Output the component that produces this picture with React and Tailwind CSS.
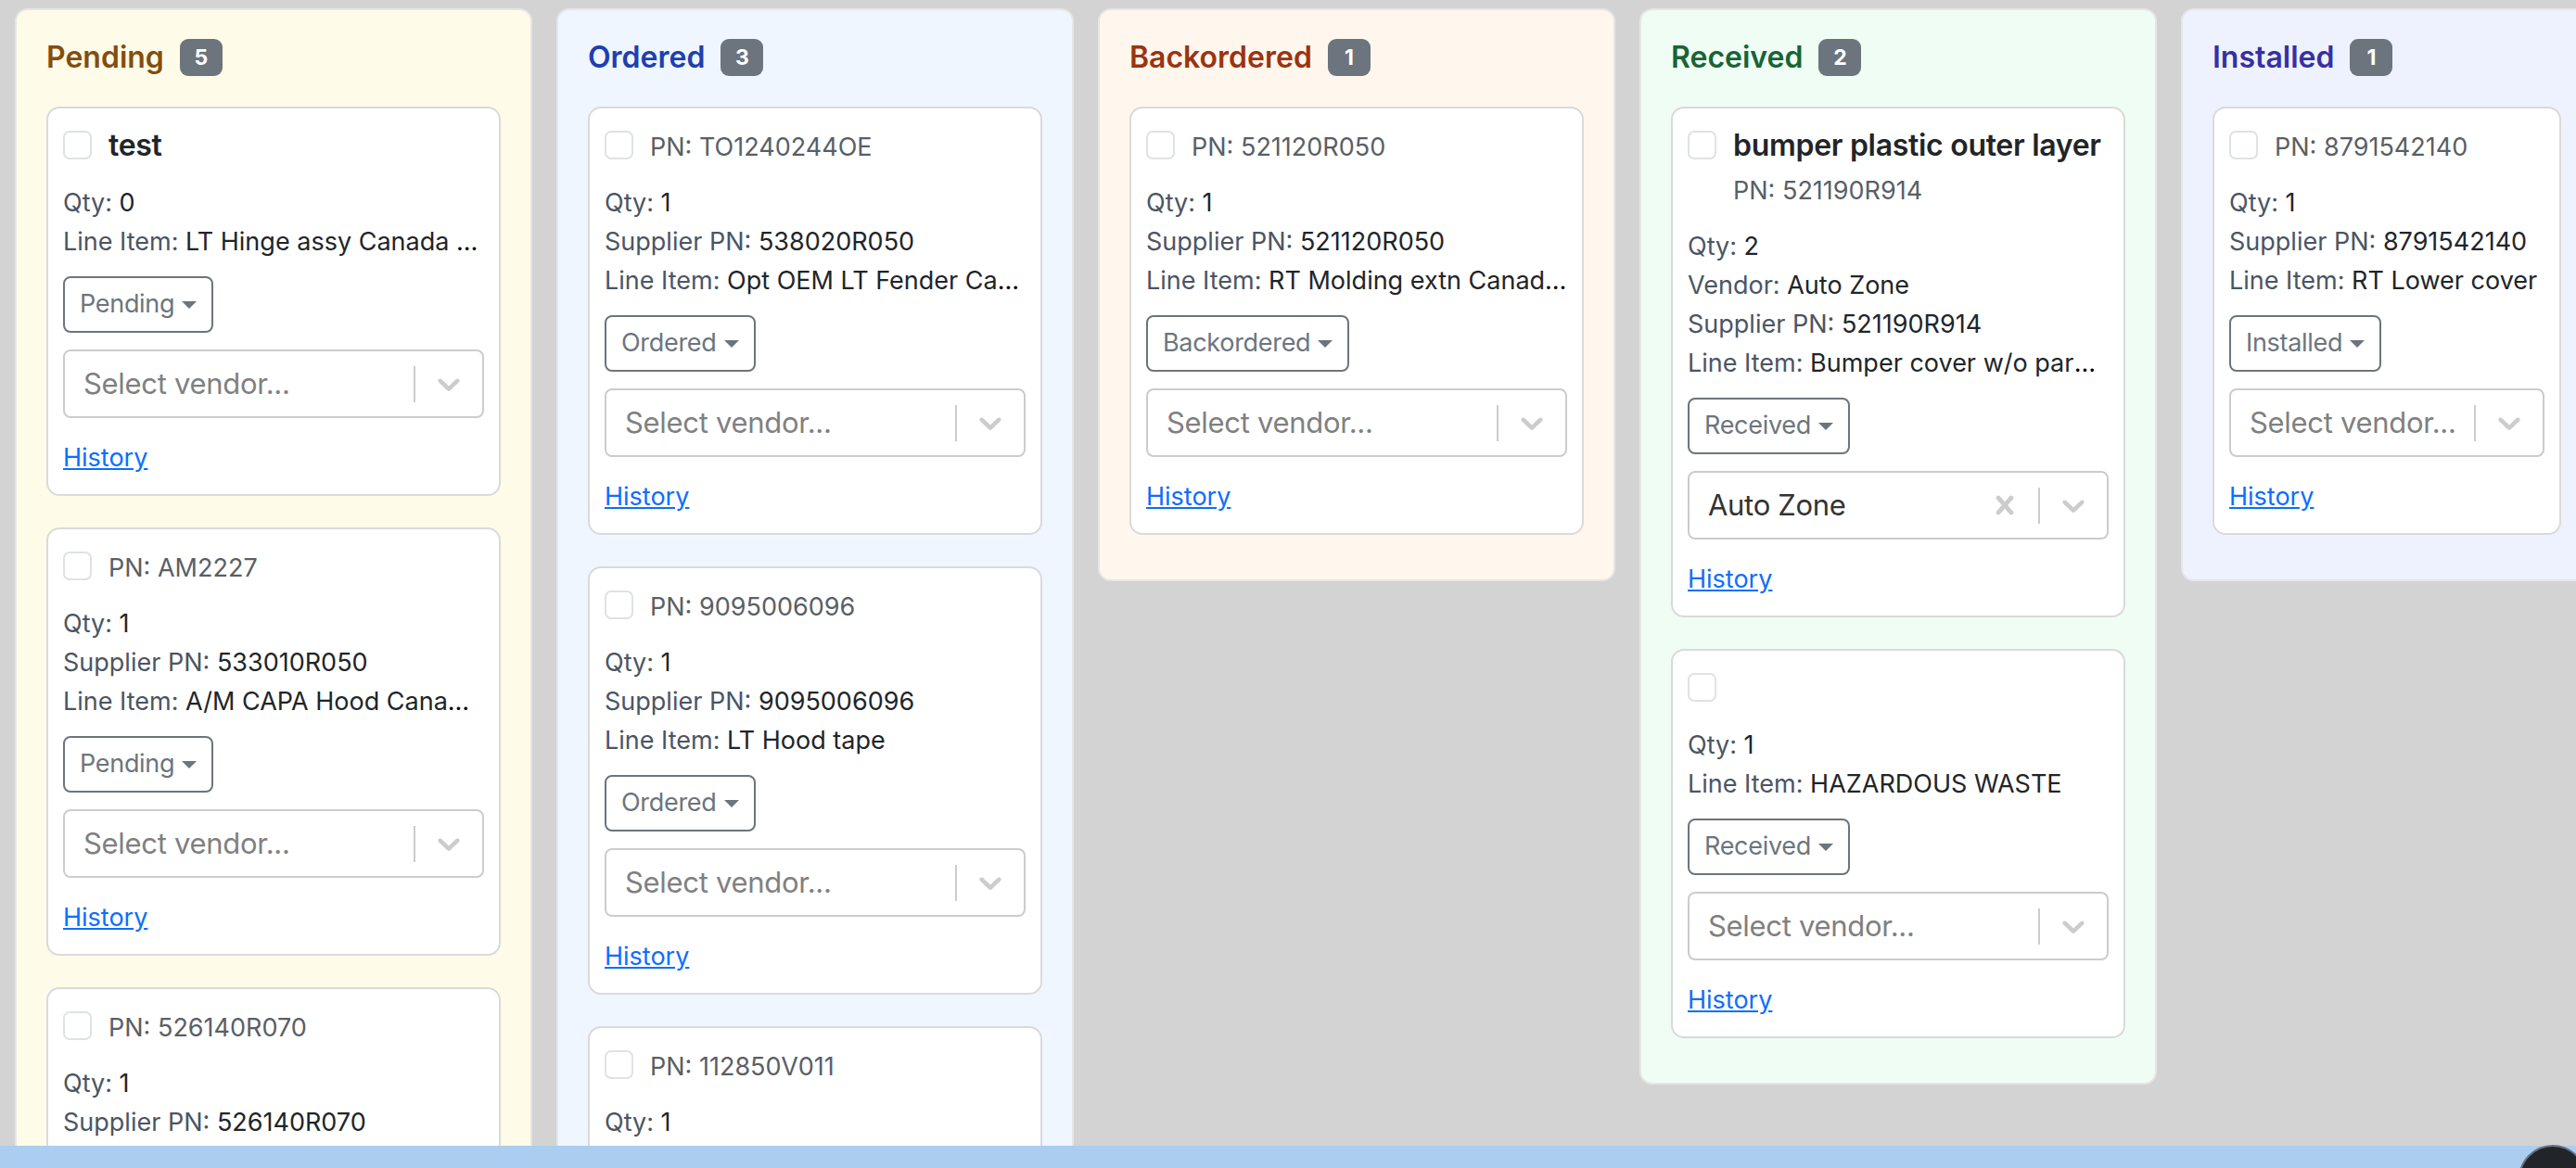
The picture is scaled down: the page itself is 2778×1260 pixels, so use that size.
import React from 'react';

const columns = [
  {
    title: 'Pending',
    count: 5,
    panel: 'w-[558px] bg-[#fefce8]',
    heading: 'text-[#854d0e]',
    items: [
      { name: 'test', qty: 0, lineItem: 'LT Hinge assy Canada built' },
      { pn: 'AM2227', qty: 1, supplierPn: '533010R050', lineItem: 'A/M CAPA Hood Canada built' },
      { pn: '526140R070', qty: 1, supplierPn: '526140R070', lineItem: 'Front bumper cover' },
    ],
  },
  {
    title: 'Ordered',
    count: 3,
    panel: 'w-[558px] bg-[#eff6ff]',
    heading: 'text-[#1e40af]',
    items: [
      { pn: 'TO1240244OE', qty: 1, supplierPn: '538020R050', lineItem: 'Opt OEM LT Fender Canada built' },
      { pn: '9095006096', qty: 1, supplierPn: '9095006096', lineItem: 'LT Hood tape' },
      { pn: '112850V011', qty: 1, supplierPn: '112850V011', lineItem: 'Radiator support' },
    ],
  },
  {
    title: 'Backordered',
    count: 1,
    panel: 'w-[558px] bg-[#fff7ed]',
    heading: 'text-[#9a3412]',
    items: [
      { pn: '521120R050', qty: 1, supplierPn: '521120R050', lineItem: 'RT Molding extn Canada built' },
    ],
  },
  {
    title: 'Received',
    count: 2,
    panel: 'w-[558px] bg-[#f0fdf4]',
    heading: 'text-[#166534]',
    items: [
      {
        name: 'bumper plastic outer layer',
        pn: '521190R914',
        qty: 2,
        vendor: 'Auto Zone',
        supplierPn: '521190R914',
        lineItem: 'Bumper cover w/o park assist',
      },
      { qty: 1, lineItem: 'HAZARDOUS WASTE' },
    ],
  },
  {
    title: 'Installed',
    count: 1,
    panel: 'w-[444px] bg-[#eef2ff]',
    heading: 'text-[#3730a3]',
    items: [
      { pn: '8791542140', qty: 1, supplierPn: '8791542140', lineItem: 'RT Lower cover' },
    ],
  },
];

function Chevron() {
  return (
    <svg viewBox="0 0 20 20" className="h-[40px] w-[40px] fill-[#cccccc]">
      <path d="M4.516 7.548c0.436-0.446 1.043-0.481 1.576 0l3.908 3.747 3.908-3.747c0.533-0.481 1.141-0.446 1.574 0 0.436 0.445 0.408 1.197 0 1.615-0.406 0.418-4.695 4.502-4.695 4.502-0.217 0.223-0.502 0.335-0.787 0.335s-0.57-0.112-0.789-0.335c0 0-4.287-4.084-4.695-4.502s-0.436-1.17 0-1.615z" />
    </svg>
  );
}

function Cross() {
  return (
    <svg viewBox="0 0 20 20" className="h-[40px] w-[40px] fill-[#cccccc]">
      <path d="M14.348 14.849c-0.469 0.469-1.229 0.469-1.697 0l-2.651-3.030-2.651 3.029c-0.469 0.469-1.229 0.469-1.697 0-0.469-0.469-0.469-1.229 0-1.697l2.758-3.15-2.759-3.152c-0.469-0.469-0.469-1.228 0-1.697s1.228-0.469 1.697 0l2.652 3.031 2.651-3.031c0.469-0.469 1.228-0.469 1.697 0s0.469 1.229 0 1.697l-2.758 3.152 2.758 3.15c0.469 0.469 0.469 1.229 0 1.698z" />
    </svg>
  );
}

function VendorSelect({ value }) {
  return (
    <div className="mt-[18px] flex h-[74px] items-center rounded-[8px] border-2 border-[#cccccc] bg-white">
      <div className={`min-w-0 flex-1 truncate pl-[20px] text-[31px] tracking-[-0.3px] ${value ? 'text-[#333333]' : 'text-[#808080]'}`}>
        {value || 'Select vendor...'}
      </div>
      {value && (
        <div className="flex w-[72px] justify-center">
          <Cross />
        </div>
      )}
      <span className="h-[39px] w-[2px] bg-[#cccccc]" />
      <div className="flex w-[72px] justify-center">
        <Chevron />
      </div>
    </div>
  );
}

function Detail({ label, value }) {
  return (
    <div className="truncate text-[27px] leading-[42px]">
      <span className="text-[#4b5563]">{label}: </span>
      <span className="text-[#212529]">{value}</span>
    </div>
  );
}

function PartCard({ item, status }) {
  return (
    <div className="rounded-[14px] border-2 border-[#dadada] bg-white px-4 pt-[21px] pb-[18px]">
      <div className="mb-[18px] flex min-h-[42px] items-start gap-[18px]">
        <span className="mt-[3px] h-[31px] w-[31px] shrink-0 rounded-[7px] border-2 border-[#dee2e6] bg-white" />
        <div className="min-w-0">
          {item.name && (
            <div className="text-[32px] leading-[38px] font-semibold tracking-[-0.3px] text-[#212529]">{item.name}</div>
          )}
          {item.pn && (
            <div className={`text-[27px] leading-[42px] text-[#595f66] ${item.name ? 'mt-[9px]' : ''}`}>
              PN: {item.pn}
            </div>
          )}
        </div>
      </div>

      <Detail label="Qty" value={item.qty} />
      {item.vendor && <Detail label="Vendor" value={item.vendor} />}
      {item.supplierPn && <Detail label="Supplier PN" value={item.supplierPn} />}
      <Detail label="Line Item" value={item.lineItem} />

      <button className="mt-[16px] inline-flex h-[61px] items-center rounded-[8px] border-2 border-[#6c757d] px-4 text-[27px] tracking-[-0.3px] text-[#6c757d]">
        {status}
        <span className="ml-[8px] inline-block h-0 w-0 border-x-[8px] border-t-[8px] border-x-transparent border-t-[#6c757d]" />
      </button>

      <VendorSelect value={item.vendor} />

      <a href="#" className="mt-[22px] block w-fit text-[27px] leading-[42px] text-[#0d6efd] underline">
        History
      </a>
    </div>
  );
}

function Column({ col }) {
  return (
    <section className={`shrink-0 rounded-[14px] border-2 border-[#e6e6e6] px-[32px] pt-[31px] pb-[48px] ${col.panel}`}>
      <div className="mb-[33px] flex h-[40px] items-center gap-[17px]">
        <h2 className={`text-[32px] font-semibold ${col.heading}`}>{col.title}</h2>
        <span className="inline-flex h-[40px] min-w-[46px] items-center justify-center rounded-[9px] bg-[#6c757d] px-[14px] text-[23px] font-bold text-white">
          {col.count}
        </span>
      </div>
      <div className="flex flex-col gap-[34px]">
        {col.items.map((item, i) => (
          <PartCard key={i} item={item} status={col.title} />
        ))}
      </div>
    </section>
  );
}

export default function App() {
  return (
    <div className="relative flex h-[1260px] w-[2778px] flex-col overflow-hidden bg-[#d3d3d3] font-[Inter,sans-serif]">
      <main className="flex min-h-0 flex-1 items-start gap-[26px] overflow-hidden pl-[16px] pt-[9px]">
        {columns.map((col) => (
          <Column key={col.title} col={col} />
        ))}
      </main>
      <footer className="h-[24px] shrink-0 bg-[#abcdef]" />
      {/* floating action button peeking from the corner */}
      <button className="absolute right-[-12px] bottom-[-49px] h-[74px] w-[74px] rounded-full border-2 border-[#6b7280] bg-[#212529]" />
    </div>
  );
}
